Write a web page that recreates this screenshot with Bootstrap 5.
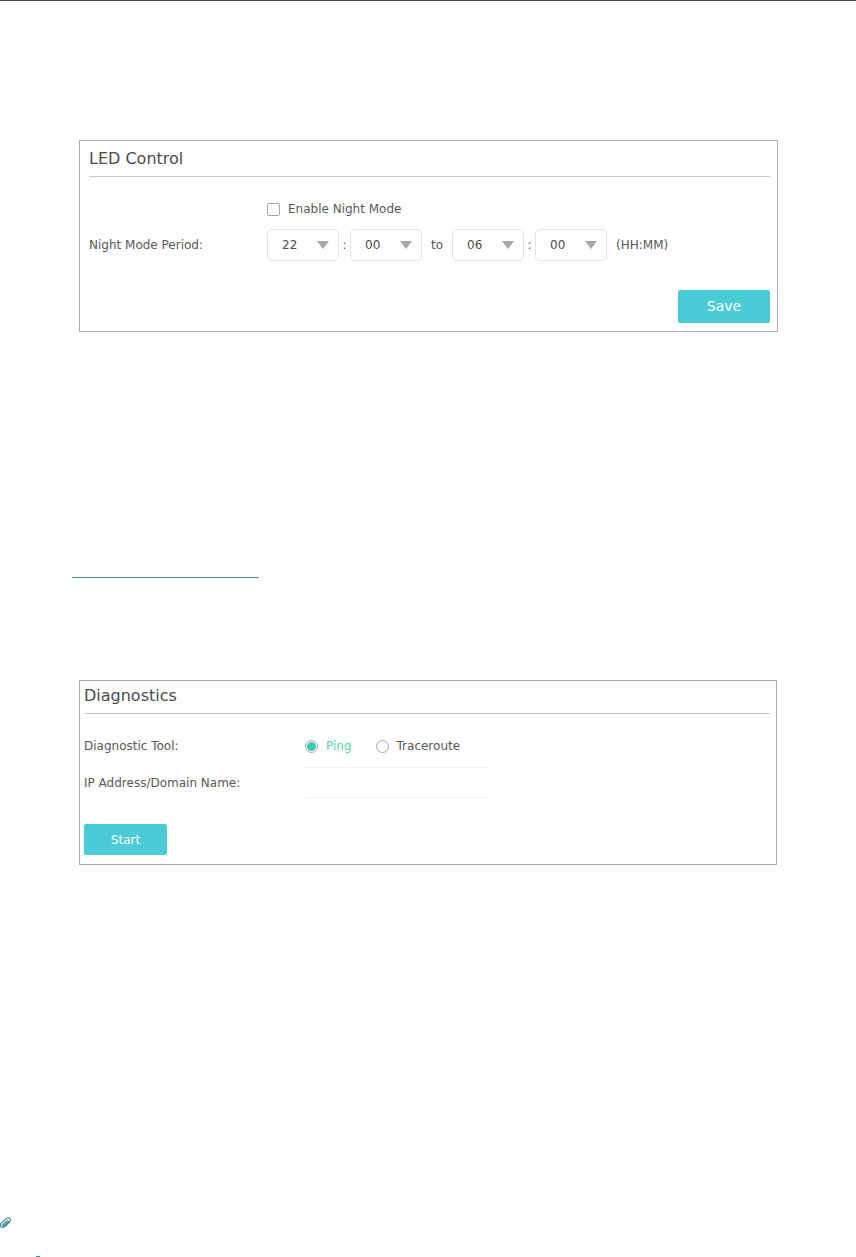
<!DOCTYPE html>
<html lang="en">
<head>
<meta charset="utf-8">
<meta name="viewport" content="width=device-width, initial-scale=1">
<title>LED Control and Diagnostics</title>
<link href="https://cdn.jsdelivr.net/npm/bootstrap@5.3.0/dist/css/bootstrap.min.css" rel="stylesheet">
<style>
body { font: 12px/16px "DejaVu Sans", Verdana, sans-serif; color: #58585a; background: #fff; }
.sheet { border-top: 1px solid #4a4a4c; }
.sheet-body { padding: 139px 78px 0 79px; }
.panel { border: 1px solid #aeaeb0; }
.panel-led { padding: 6px 7px 8px 9px; }
.panel-diag { padding: 3px 6px 9px 4px; margin-right: 1px; }
.panel-title { font-size: 16px; line-height: 24px; color: #4b4b4d; padding-bottom: 5px; margin: 0; border-bottom: 1px solid #c9c9cb; }
.led-label { width: 178px; }
.diag-label { width: 221px; }
.tick, .dot { appearance: none; width: 13px; height: 13px; margin: 0; border: 1px solid #a6a6a8; background: #fff; flex: none; }
.tick { border-radius: 2px; }
.tick:checked { background: #4acbd6; }
.dot { border-radius: 50%; }
.dot:checked { background: radial-gradient(circle, #3fc8b4 0 4px, #fff 5px); }
.dot:checked + label { color: #62cfb0; }
.time-select { width: 72px; height: 32px; padding: 0 0 0 14px; font-size: 12px; line-height: 16px; color: #4b4b4d; border: 1px solid #e4e4e6; border-radius: 5px;
  background: #fff url("data:image/svg+xml,%3Csvg xmlns='http://www.w3.org/2000/svg' viewBox='0 0 12 8'%3E%3Cpath fill='%23a7a7a9' d='M0 0h12L6 8z'/%3E%3C/svg%3E") no-repeat right 9px center / 12px 8px; }
.colon { width: 11px; text-align: center; }
.between { padding: 0 9px; }
.save-row { margin-top: 29px; }
.btn-aqua { --bs-btn-color: #fff; --bs-btn-bg: #4acbd6; --bs-btn-border-color: #4acbd6; --bs-btn-hover-color: #fff; --bs-btn-hover-bg: #3bbcc8; --bs-btn-hover-border-color: #3bbcc8; --bs-btn-border-radius: 2px; --bs-btn-padding-y: 0; }
.btn-save { width: 92px; height: 33px; font-size: 14px; }
.btn-start { width: 83px; height: 31px; font-size: 12px; margin-top: 26px; }
.host-row { margin-top: 13px; }
.host-input { width: 183px; height: 31px; padding: 0 8px; border: 1px solid #f0f0f4; border-width: 1px 0; background: transparent; color: inherit; }
.rule { width: 187px; height: 1px; background: #458e9b; margin: 245px 0 102px -7px; }
.clip { display: block; width: 11px; height: 11px; }
.dash { width: 4px; height: 1px; margin: 28px 0 0 36px; background: #458e9b; }
</style>
</head>
<body>
<div class="sheet d-flex flex-column min-vh-100">
  <main class="sheet-body">
    <form class="panel panel-led">
      <h1 class="panel-title fw-normal">LED Control</h1>
      <div class="d-flex mt-4">
        <div class="led-label"></div>
        <div class="d-flex align-items-center gap-2">
          <input class="tick" type="checkbox" id="night">
          <label for="night">Enable Night Mode</label>
        </div>
      </div>
      <div class="d-flex align-items-center mt-2 pt-1">
        <label class="led-label" for="from-h">Night Mode Period:</label>
        <select class="time-select form-select" id="from-h"><option>22</option></select>
        <span class="colon">:</span>
        <select class="time-select form-select" aria-label="Start minute"><option>00</option></select>
        <span class="between">to</span>
        <select class="time-select form-select" aria-label="End hour"><option>06</option></select>
        <span class="colon">:</span>
        <select class="time-select form-select" aria-label="End minute"><option>00</option></select>
        <span class="between">(HH:MM)</span>
      </div>
      <div class="save-row d-flex justify-content-end">
        <button class="btn btn-aqua btn-save" type="button">Save</button>
      </div>
    </form>

    <div class="rule"></div>

    <form class="panel panel-diag">
      <h2 class="panel-title fw-normal">Diagnostics</h2>
      <div class="d-flex align-items-center mt-4">
        <span class="diag-label" id="tool">Diagnostic Tool:</span>
        <div class="d-flex align-items-center gap-2" role="radiogroup" aria-labelledby="tool">
          <input class="dot" type="radio" name="tool" id="ping" checked>
          <label class="me-3" for="ping">Ping</label>
          <input class="dot" type="radio" name="tool" id="trace">
          <label for="trace">Traceroute</label>
        </div>
      </div>
      <div class="host-row d-flex align-items-center">
        <label class="diag-label" for="host">IP Address/Domain Name:</label>
        <input class="host-input" type="text" id="host">
      </div>
      <button class="btn btn-aqua btn-start" type="button">Start</button>
    </form>
  </main>

  <footer class="mt-auto">
    <svg class="clip" viewBox="0 0 11 11" fill="none" stroke="#458e9b" stroke-linecap="round" aria-hidden="true">
      <path stroke-width="1.2" d="M1.500 6 5.500 2.200Q8.500-.200 10 1.500 11.200 3.200 9 5.600L5.200 9.200Q2.200 11.200.800 9.500-.300 7.800 1.500 6M3 7.800 7.300 3.600M4.600 8.300 8.600 4.500M2.800 8Q2.800 9.400 4.600 8.300"/>
    </svg>
    <div class="dash"></div>
  </footer>
</div>
<script src="https://cdn.jsdelivr.net/npm/bootstrap@5.3.0/dist/js/bootstrap.bundle.min.js"></script>
</body>
</html>
